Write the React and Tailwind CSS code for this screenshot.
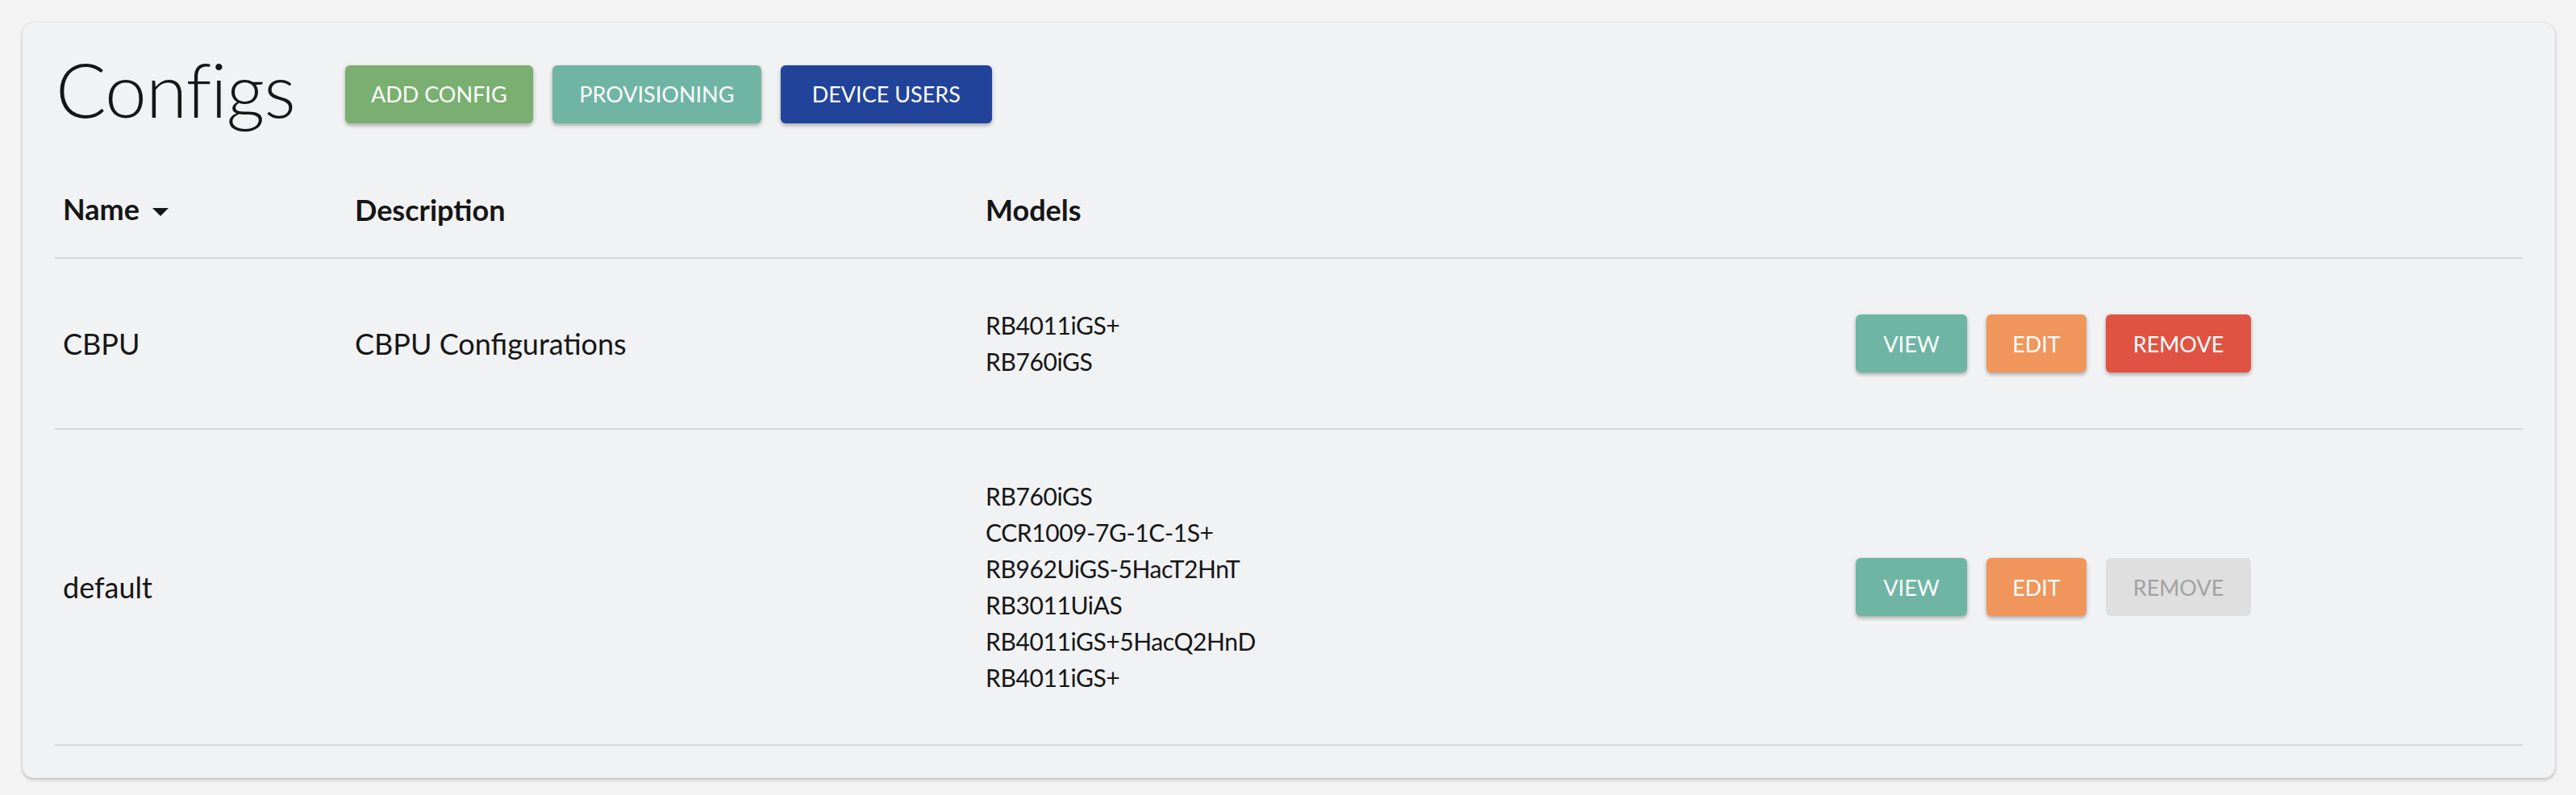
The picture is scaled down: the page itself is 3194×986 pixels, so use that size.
const configs = [
  {
    name: 'CBPU',
    description: 'CBPU Configurations',
    models: ['RB4011iGS+', 'RB760iGS'],
    canRemove: true,
  },
  {
    name: 'default',
    description: '',
    models: ['RB760iGS', 'CCR1009-7G-1C-1S+', 'RB962UiGS-5HacT2HnT', 'RB3011UiAS', 'RB4011iGS+5HacQ2HnD', 'RB4011iGS+'],
    canRemove: false,
  },
];

const btn = 'h-[72px] rounded-[6px] text-[27px] uppercase text-white leading-none text-center shadow-[0_3px_4px_rgba(0,0,0,0.22),0_1px_6px_rgba(0,0,0,0.1)]';

const App = () => {
  return (
    <div className="min-h-[986px] bg-[#f3f3f3] pt-[28px] px-[28px] font-['Lato',sans-serif] text-[#161616]">
      <div className="w-[3140px] bg-[#f1f2f4] rounded-[14px] shadow-[0_2px_4px_rgba(0,0,0,0.22),0_0_2px_rgba(0,0,0,0.12)] px-[40px] pt-[36px] pb-[40px]">
        <div className="flex items-center">
          <h1 className="text-[93px] font-light leading-none mb-[12px] ml-[1px] tracking-[-1px]">Configs</h1>
          <div className="flex items-center gap-[24px] ml-[62px]">
            <button className={`${btn} w-[233px] bg-[#7aaf71]`}>Add Config</button>
            <button className={`${btn} w-[259px] bg-[#70b5a4]`}>Provisioning</button>
            <button className={`${btn} w-[262px] bg-[#21449a]`}>Device Users</button>
          </div>
        </div>

        <table className="w-[3060px] mt-[32px] border-collapse table-fixed">
          <colgroup>
            <col className="w-[362px]" />
            <col className="w-[782px]" />
            <col className="w-[1079px]" />
            <col className="w-[837px]" />
          </colgroup>
          <thead>
            <tr className="border-b-2 border-[#d5d6d9]">
              <th className="text-left font-bold text-[36px] leading-[45px] pl-[10px] pt-[36px] pb-[37px]">
                <span className="inline-flex items-center gap-[16px]">
                  Name
                  <svg width="20" height="10" viewBox="0 0 20 10" className="mt-[6px]">
                    <path d="M0 0 L20 0 L10 10 Z" fill="#161616" />
                  </svg>
                </span>
              </th>
              <th className="text-left font-bold text-[36px] leading-[45px] pl-[10px]">Description</th>
              <th className="text-left font-bold text-[36px] leading-[45px] pl-[10px]">Models</th>
              <th />
            </tr>
          </thead>
          <tbody>
            {configs.map((c) => (
              <tr key={c.name} className="border-b-2 border-[#d5d6d9]">
                <td className="pl-[10px] text-[36px] align-middle">{c.name}</td>
                <td className="pl-[10px] text-[36px] align-middle">{c.description}</td>
                <td className="pl-[10px] py-[60px] text-[30px] tracking-[-0.4px] leading-[45px] align-middle">
                  {c.models.map((m, i) => (
                    <div key={i}>{m}</div>
                  ))}
                </td>
                <td className="pl-[10px] align-middle">
                  <div className="flex items-center gap-[24px]">
                    <button className={`${btn} w-[138px] bg-[#6fb5a4]`}>View</button>
                    <button className={`${btn} w-[124px] bg-[#f0965c]`}>Edit</button>
                    {c.canRemove ? (
                      <button className={`${btn} w-[180px] bg-[#e05343]`}>Remove</button>
                    ) : (
                      <button className="h-[72px] w-[180px] rounded-[6px] text-[27px] uppercase leading-none text-center bg-[#dfdfdf] text-[#a2a2a2]" disabled>
                        Remove
                      </button>
                    )}
                  </div>
                </td>
              </tr>
            ))}
          </tbody>
        </table>
      </div>
    </div>
  );
};

export default App;
